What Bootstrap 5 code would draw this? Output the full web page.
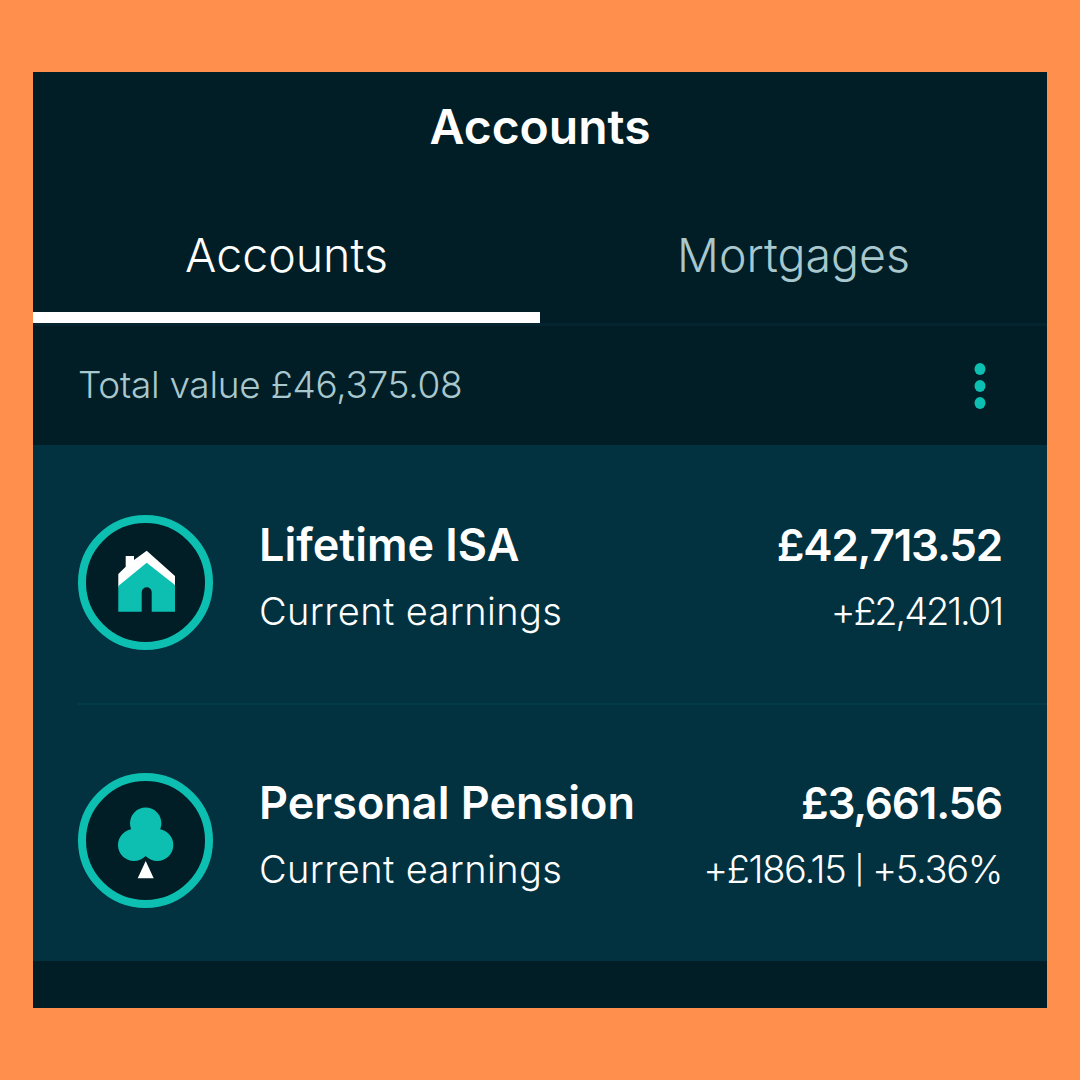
<!DOCTYPE html>
<html lang="en">
  <head>
    <meta charset="UTF-8" />
    <title>Accounts</title>
    <link href="https://cdn.jsdelivr.net/npm/bootstrap@5.3.0/dist/css/bootstrap.min.css" rel="stylesheet" />
    <style>
      body {
        background: #ff8f4d;
        padding: 72px 33px;
        font-family: "Inter", "Liberation Sans", sans-serif;
        color: #fff;
      }
      .app-frame {
        background: #011e26;
        height: 936px;
      }
      .app-title {
        height: 110px;
        font-size: 48px;
        font-weight: 600;
        margin-bottom: 8px;
      }
      .tab-row {
        height: 136px;
        border-bottom: 3px solid #04252f;
      }
      .tab-item {
        width: 50%;
        font-size: 46.5px;
        font-weight: 300;
        padding-top: 10px;
        border-bottom: 11px solid transparent;
        color: #a8c8ce;
      }
      .tab-item.is-active {
        color: #fff;
        border-bottom-color: #fff;
      }
      .total-row {
        height: 119px;
        padding: 0 60px 0 45px;
        color: #a8c8ce;
        font-size: 37px;
        font-weight: 300;
        letter-spacing: -0.3px;
      }
      .total-text {
        margin-bottom: 2px;
      }
      .acct-list {
        background: #023140;
      }
      .acct-row {
        height: 258px;
        padding: 70px 45px 53px 45px;
        gap: 46px;
      }
      .acct-row.is-last {
        height: 256px;
        padding-top: 68px;
      }
      .acct-rule {
        height: 2px;
        margin-left: 45px;
        background: #053a49;
      }
      .acct-name,
      .acct-amount {
        font-size: 45px;
        font-weight: 600;
        line-height: 60px;
      }
      .acct-amount {
        font-size: 44px;
        letter-spacing: -1.2px;
      }
      .acct-sub,
      .acct-change {
        font-size: 38px;
        font-weight: 300;
        line-height: 50px;
        margin-top: 11px;
      }
      .acct-sub {
        letter-spacing: 0.4px;
      }
      .acct-change {
        letter-spacing: -2.1px;
      }
      .acct-change.is-split {
        letter-spacing: -1.3px;
      }
      .acct-pipe {
        font-size: 28px;
        font-weight: 400;
        vertical-align: 3px;
      }
    </style>
  </head>
  <body>
    <div class="app-frame">
      <div class="app-title d-flex align-items-center justify-content-center">Accounts</div>
      <div class="tab-row d-flex">
        <div class="tab-item is-active d-flex align-items-center justify-content-center">Accounts</div>
        <div class="tab-item d-flex align-items-center justify-content-center">Mortgages</div>
      </div>
      <div class="total-row d-flex align-items-center justify-content-between">
        <span class="total-text">Total value £46,375.08</span>
        <svg width="14" height="46" viewBox="0 0 14 46" fill="#0dbfb1">
          <ellipse cx="7" cy="6" rx="5.5" ry="6" />
          <ellipse cx="7" cy="23" rx="5.5" ry="6" />
          <ellipse cx="7" cy="40" rx="5.5" ry="6" />
        </svg>
      </div>
      <div class="acct-list">
        <div class="acct-row d-flex">
          <svg class="flex-shrink-0" width="135" height="135" viewBox="0 0 135 135">
            <circle cx="67.5" cy="67.5" r="63.5" fill="#011e26" stroke="#0dbfb1" stroke-width="8" />
            <path fill="#fff" d="M40.3 59L47.7 51.7V41H56V45L68.7 35.7L97 61V72H40.3Z" />
            <path fill="#0dbfb1" fill-rule="evenodd" d="M40.3 71L68.7 47.7L97 70V96.7H73.7V77.3A5 5 0 0 0 63.7 77.3V96.7H40.3Z" />
          </svg>
          <div class="flex-grow-1">
            <div class="acct-name">Lifetime ISA</div>
            <div class="acct-sub">Current earnings</div>
          </div>
          <div class="text-end">
            <div class="acct-amount">£42,713.52</div>
            <div class="acct-change">+£2,421.01</div>
          </div>
        </div>
        <div class="acct-rule"></div>
        <div class="acct-row is-last d-flex">
          <svg class="flex-shrink-0" width="135" height="135" viewBox="0 0 135 135">
            <circle cx="67.5" cy="67.5" r="63.5" fill="#011e26" stroke="#0dbfb1" stroke-width="8" />
            <g fill="#0dbfb1">
              <circle cx="67.7" cy="50.3" r="15.7" />
              <circle cx="56" cy="72" r="16" />
              <circle cx="79.3" cy="72" r="16" />
              <circle cx="67.7" cy="68" r="10" />
            </g>
            <path fill="#fff" d="M67.7 88L75.7 105.3H59.7Z" />
          </svg>
          <div class="flex-grow-1">
            <div class="acct-name">Personal Pension</div>
            <div class="acct-sub">Current earnings</div>
          </div>
          <div class="text-end">
            <div class="acct-amount">£3,661.56</div>
            <div class="acct-change is-split">+£186.15 <span class="acct-pipe">|</span> +5.36%</div>
          </div>
        </div>
      </div>
    </div>
    <script src="https://cdn.jsdelivr.net/npm/bootstrap@5.3.0/dist/js/bootstrap.bundle.min.js"></script>
  </body>
</html>
